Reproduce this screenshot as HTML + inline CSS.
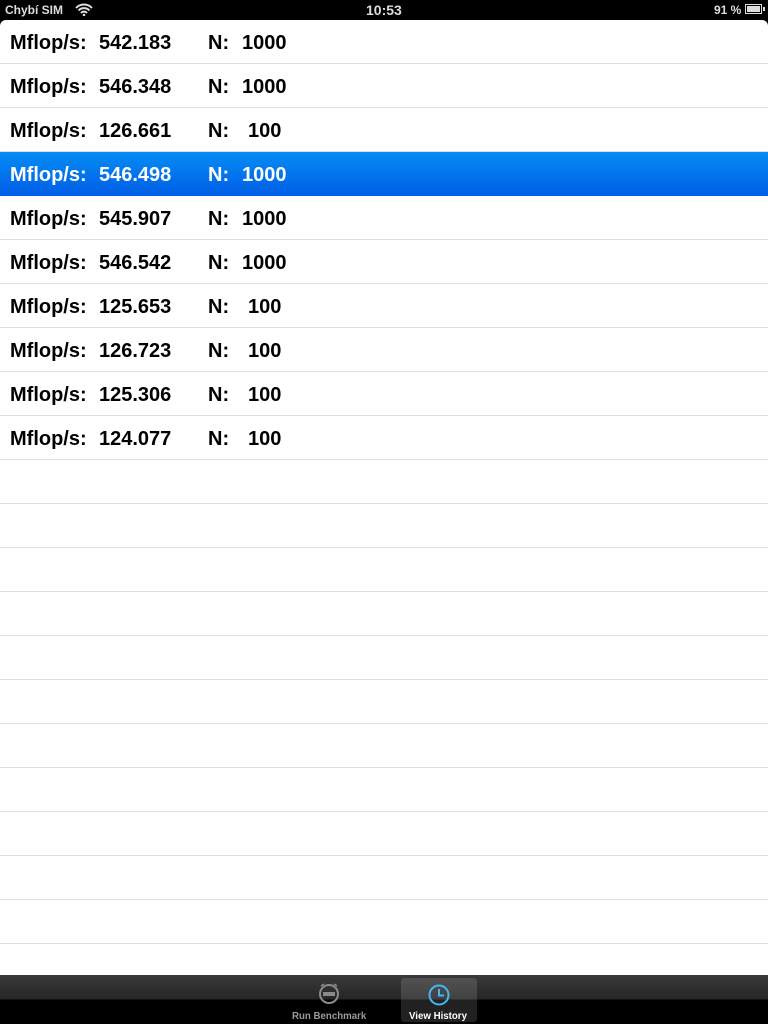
<!DOCTYPE html><html><head><style>
*{margin:0;padding:0;box-sizing:border-box}
body{width:768px;height:1024px;background:#000;position:relative;overflow:hidden;font-family:"Liberation Sans",sans-serif}
.sb{position:absolute;top:0;left:0;width:768px;height:20px;color:#ddd;font-size:12px;font-weight:bold}
.table{position:absolute;top:20px;left:0;width:768px;height:955px;background:#fff;border-radius:6px 6px 0 0;overflow:hidden}
.row{position:absolute;left:0;width:768px;height:44px;border-bottom:1px solid #e0e0e0;font-size:20px;font-weight:bold;color:#000}
.row span{position:absolute;top:12px}
.sel{background:linear-gradient(#058cf5,#015ee6);color:#fff;border-bottom:none}
.tab{position:absolute;top:975px;left:0;width:768px;height:49px;background:linear-gradient(#3a3a3a 0,#262626 24px,#000 25px,#000)}
</style></head><body>
<div class="sb"><span style="position:absolute;left:5px;top:3px">Chybí SIM</span>
<svg style="position:absolute;left:75px;top:3px" width="18" height="13" viewBox="0 0 18 13"><path d="M1 5a11 11 0 0 1 16 0M3.5 7.5a7.5 7.5 0 0 1 11 0M6 10a4 4 0 0 1 6 0" stroke="#ddd" stroke-width="2" fill="none"/><circle cx="9" cy="12" r="1.3" fill="#ddd"/></svg>
<span style="position:absolute;left:366px;top:2px;font-size:14px">10:53</span>
<span style="position:absolute;left:714px;top:3px;font-size:12px">91 %</span>
<div style="position:absolute;left:745px;top:4px;width:17px;height:10px;border:1px solid #ddd;padding:1px"><div style="width:13px;height:6px;background:#ddd"></div></div>
<div style="position:absolute;left:763px;top:7px;width:2px;height:4px;background:#ddd"></div>
</div>
<div class="table">
<div class="row" style="top:0"><span style="left:10px">Mflop/s:</span><span style="left:99px">542.183</span><span style="left:208px">N:</span><span style="left:242px">1000</span></div>
<div class="row" style="top:44px"><span style="left:10px">Mflop/s:</span><span style="left:99px">546.348</span><span style="left:208px">N:</span><span style="left:242px">1000</span></div>
<div class="row" style="top:88px"><span style="left:10px">Mflop/s:</span><span style="left:99px">126.661</span><span style="left:208px">N:</span><span style="left:248px">100</span></div>
<div class="row sel" style="top:132px"><span style="left:10px">Mflop/s:</span><span style="left:99px">546.498</span><span style="left:208px">N:</span><span style="left:242px">1000</span></div>
<div class="row" style="top:176px"><span style="left:10px">Mflop/s:</span><span style="left:99px">545.907</span><span style="left:208px">N:</span><span style="left:242px">1000</span></div>
<div class="row" style="top:220px"><span style="left:10px">Mflop/s:</span><span style="left:99px">546.542</span><span style="left:208px">N:</span><span style="left:242px">1000</span></div>
<div class="row" style="top:264px"><span style="left:10px">Mflop/s:</span><span style="left:99px">125.653</span><span style="left:208px">N:</span><span style="left:248px">100</span></div>
<div class="row" style="top:308px"><span style="left:10px">Mflop/s:</span><span style="left:99px">126.723</span><span style="left:208px">N:</span><span style="left:248px">100</span></div>
<div class="row" style="top:352px"><span style="left:10px">Mflop/s:</span><span style="left:99px">125.306</span><span style="left:208px">N:</span><span style="left:248px">100</span></div>
<div class="row" style="top:396px"><span style="left:10px">Mflop/s:</span><span style="left:99px">124.077</span><span style="left:208px">N:</span><span style="left:248px">100</span></div>
<div class="row" style="top:440px"></div><div class="row" style="top:484px"></div><div class="row" style="top:528px"></div><div class="row" style="top:572px"></div><div class="row" style="top:616px"></div><div class="row" style="top:660px"></div><div class="row" style="top:704px"></div><div class="row" style="top:748px"></div><div class="row" style="top:792px"></div><div class="row" style="top:836px"></div><div class="row" style="top:880px"></div>
</div>
<div class="tab">
<div style="position:absolute;left:401px;top:3px;width:76px;height:44px;background:rgba(255,255,255,0.13);border-radius:3px"></div>
<svg style="position:absolute;left:317px;top:6px" width="24" height="24" viewBox="0 0 24 24"><circle cx="12" cy="13" r="9" stroke="#8a8a8a" stroke-width="2" fill="none"/><rect x="6" y="11" width="12" height="4" fill="#8a8a8a"/><path d="M4 5l3-2M20 5l-3-2" stroke="#8a8a8a" stroke-width="1.5"/></svg>
<svg style="position:absolute;left:427px;top:8px" width="24" height="24" viewBox="0 0 24 24"><circle cx="12" cy="12" r="9.5" stroke="#3fb8f5" stroke-width="2" fill="none"/><path d="M12 6v6.5h5" stroke="#3fb8f5" stroke-width="2" fill="none"/></svg>
<span style="position:absolute;left:292px;top:36px;font-size:9.7px;font-weight:bold;color:#9a9a9a">Run Benchmark</span>
<span style="position:absolute;left:409px;top:36px;font-size:9.7px;font-weight:bold;color:#fff">View History</span>
</div>
</body></html>
